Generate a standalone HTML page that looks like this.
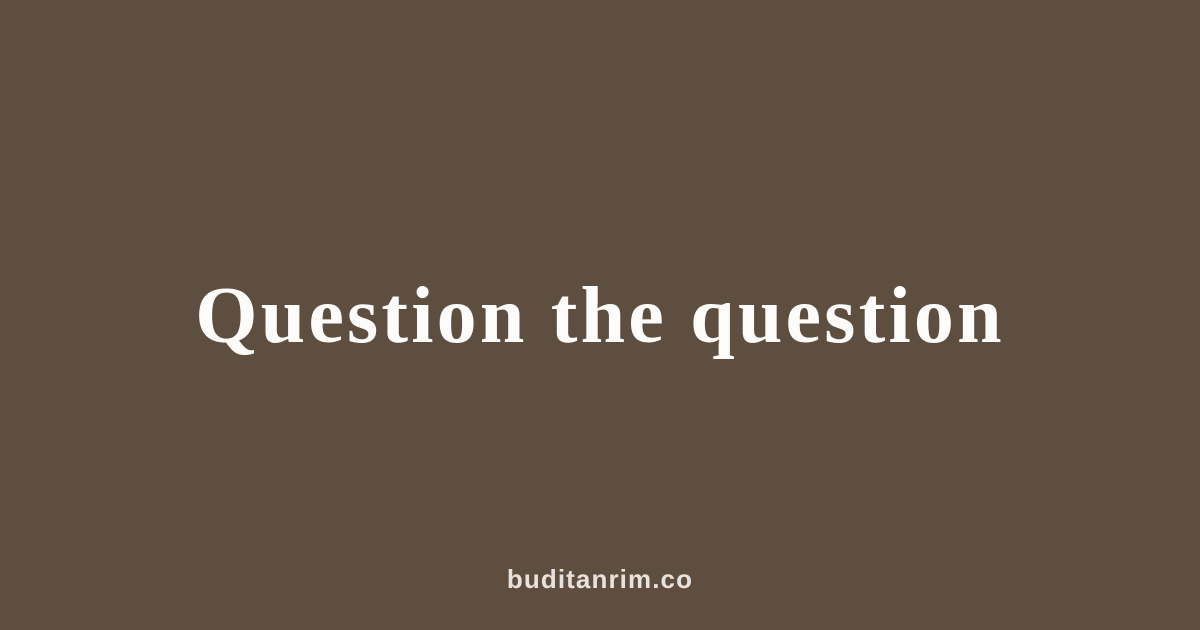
<!DOCTYPE html>
<html><head><style>
html,body{margin:0;padding:0}
body{width:1200px;height:630px;background:#5e4e40;position:relative;overflow:hidden}
.t{position:absolute;left:0;width:1200px;top:270px;text-align:center;font-family:"Liberation Serif",serif;font-weight:bold;font-size:80px;line-height:92px;color:#fdfcfa;white-space:nowrap;letter-spacing:3.2px}
.f{position:absolute;left:0;width:1200px;top:563px;text-align:center;font-family:"Liberation Sans",sans-serif;font-weight:bold;font-size:26px;line-height:32px;color:#e8e2dc;letter-spacing:1.1px}
</style></head><body>
<div class="t">Question the question</div>
<div class="f">buditanrim.co</div>
</body></html>
